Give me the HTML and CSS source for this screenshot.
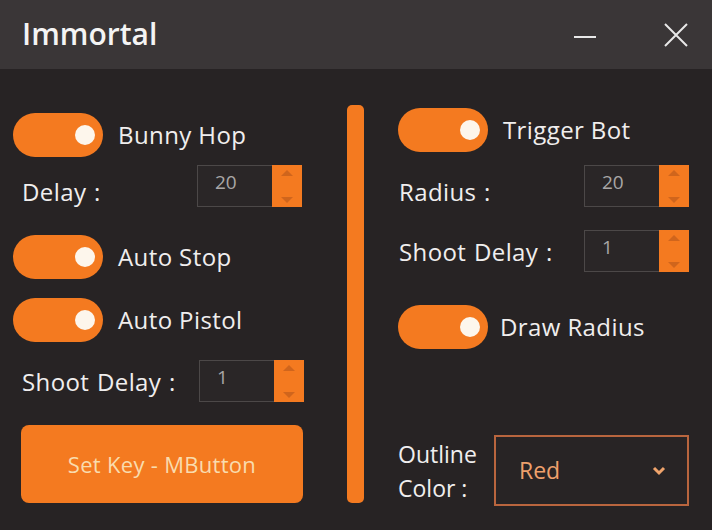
FILE: index.html
```html
<!DOCTYPE html>
<html lang="en">
<head>
    <link rel="stylesheet" href="styles.css">
</head>
<body>
    <div class="window">
        <div class="titlebar">
            <span class="title">Immortal</span>
            <div class="controls">
                <svg class="ctl" width="24" height="24" viewBox="0 0 24 24"><line x1="1" y1="14" x2="23" y2="14" stroke="#e8e8e8" stroke-width="2"/></svg>
                <svg class="ctl close" width="26" height="26" viewBox="0 0 26 26"><path d="M2 2 L24 24 M24 2 L2 24" stroke="#e8e8e8" stroke-width="2" fill="none"/></svg>
            </div>
        </div>

        <div class="content">
            <div class="column left">
                <div class="row toggle-row r1">
                    <div class="toggle"><span class="knob"></span></div>
                    <span class="label">Bunny Hop</span>
                </div>
                <div class="row field-row r2">
                    <span class="field-label low">Delay :</span>
                    <div class="spinner">
                        <div class="spin-value">20</div>
                        <div class="spin-btns">
                            <svg width="30" height="42" viewBox="0 0 30 42"><path d="M9 11 L15 5 L21 11 Z" fill="#d0651c"/><path d="M9 32 L15 38 L21 32 Z" fill="#d0651c"/></svg>
                        </div>
                    </div>
                </div>
                <div class="row toggle-row r3">
                    <div class="toggle"><span class="knob"></span></div>
                    <span class="label">Auto Stop</span>
                </div>
                <div class="row toggle-row r4">
                    <div class="toggle"><span class="knob"></span></div>
                    <span class="label">Auto Pistol</span>
                </div>
                <div class="row field-row r5">
                    <span class="field-label">Shoot Delay :</span>
                    <div class="spinner">
                        <div class="spin-value">1</div>
                        <div class="spin-btns">
                            <svg width="30" height="42" viewBox="0 0 30 42"><path d="M9 11 L15 5 L21 11 Z" fill="#d0651c"/><path d="M9 32 L15 38 L21 32 Z" fill="#d0651c"/></svg>
                        </div>
                    </div>
                </div>
                <button class="key-btn">Set Key - MButton</button>
            </div>

            <div class="divider"></div>

            <div class="column right">
                <div class="row toggle-row q1">
                    <div class="toggle"><span class="knob"></span></div>
                    <span class="label">Trigger Bot</span>
                </div>
                <div class="row field-row q2">
                    <span class="field-label low">Radius :</span>
                    <div class="spinner">
                        <div class="spin-value">20</div>
                        <div class="spin-btns">
                            <svg width="30" height="42" viewBox="0 0 30 42"><path d="M9 11 L15 5 L21 11 Z" fill="#d0651c"/><path d="M9 32 L15 38 L21 32 Z" fill="#d0651c"/></svg>
                        </div>
                    </div>
                </div>
                <div class="row field-row q3">
                    <span class="field-label">Shoot Delay :</span>
                    <div class="spinner">
                        <div class="spin-value">1</div>
                        <div class="spin-btns">
                            <svg width="30" height="42" viewBox="0 0 30 42"><path d="M9 11 L15 5 L21 11 Z" fill="#d0651c"/><path d="M9 32 L15 38 L21 32 Z" fill="#d0651c"/></svg>
                        </div>
                    </div>
                </div>
                <div class="row toggle-row q4">
                    <div class="toggle"><span class="knob"></span></div>
                    <span class="label">Draw Radius</span>
                </div>
                <div class="row outline-row">
                    <span class="outline-label">Outline<br>Color :</span>
                    <div class="dropdown">
                        <span class="dd-value">Red</span>
                        <svg width="16" height="12" viewBox="0 0 16 12"><path d="M3 3 L8 8 L13 3" fill="none" stroke="#f0a46c" stroke-width="3"/></svg>
                    </div>
                </div>
            </div>
        </div>
    </div>
</body>
</html>
```

FILE: styles.css
```css
body
{
    margin: 0;
    background-color: #272324;
    font-family: "Open Sans", "Noto Sans", sans-serif;
    color: #f0eeee;
}
.window
{
    width: 712px;
    height: 530px;
    overflow: hidden;
}
.titlebar
{
    height: 69px;
    background-color: #3a3637;
    display: flex;
    align-items: center;
    justify-content: space-between;
    padding: 0 22px;
    box-sizing: border-box;
}
.title
{
    font-size: 30px;
    font-weight: 600;
    color: #f4f4f4;
    margin-top: -2px;
}
.controls
{
    display: flex;
    align-items: center;
    gap: 66px;
    margin-right: 1px;
}
.content
{
    display: flex;
    padding-left: 13px;
}
.column
{
    display: flex;
    flex-direction: column;
}
.left
{
    width: 291px;
}
.right
{
    width: 292px;
    margin-left: 34px;
}
.divider
{
    width: 17px;
    height: 398px;
    margin-top: 36px;
    margin-left: 43px;
    background-color: #f47a20;
    border-radius: 5px;
}
.row
{
    display: flex;
    align-items: center;
}
.toggle
{
    width: 90px;
    height: 44px;
    border-radius: 22px;
    background-color: #f47a20;
    position: relative;
    flex-shrink: 0;
}
.knob
{
    position: absolute;
    right: 8px;
    top: 12px;
    width: 20px;
    height: 20px;
    border-radius: 50%;
    background-color: #fdf6ec;
}
.label
{
    font-size: 24px;
    letter-spacing: 0.4px;
    margin-left: 15px;
    margin-top: -2px;
}
.field-label
{
    font-size: 24px;
    letter-spacing: 0.4px;
    word-spacing: 1px;
    width: 175px;
    padding-left: 9px;
    flex-shrink: 0;
}
.field-label.low
{
    padding-top: 12px;
    line-height: 30px;
}
.spinner
{
    display: flex;
    height: 42px;
}
.spin-value
{
    width: 75px;
    box-sizing: border-box;
    border: 1px solid #4c4848;
    border-right: none;
    background-color: #2a2627;
    color: #a9a6a6;
    font-size: 19px;
    padding: 3px 0 0 17px;
}
.spin-btns
{
    width: 30px;
    background-color: #f47a20;
}
.spin-btns svg
{
    display: block;
}
.r1 { margin-top: 44px; }
.r2 { margin-top: 8px; }
.r3 { margin-top: 28px; }
.r4 { margin-top: 19px; }
.r5 { margin-top: 18px; }
.r5 .spin-value { margin-left: 2px; }
.key-btn
{
    margin-top: 23px;
    margin-left: 8px;
    width: 282px;
    height: 78px;
    border: none;
    border-radius: 8px;
    background-color: #f47a20;
    color: #f9dcae;
    font-family: "Open Sans", "Noto Sans", sans-serif;
    font-size: 22px;
    letter-spacing: 0.3px;
}
.q1 { margin-top: 39px; }
.q2 { margin-top: 13px; }
.q3 { margin-top: 23px; }
.q4 { margin-top: 33px; }
.right .field-label
{
    width: 185px;
    padding-left: 1px;
}
.q4 .label
{
    margin-left: 12px;
}
.outline-row
{
    margin-top: 86px;
}
.outline-label
{
    font-size: 23px;
    line-height: 34px;
    width: 96px;
    flex-shrink: 0;
}
.dropdown
{
    width: 195px;
    height: 71px;
    box-sizing: border-box;
    border: 2px solid #b9653e;
    background-color: #282425;
    display: flex;
    align-items: center;
    justify-content: space-between;
    padding: 0 20px 0 23px;
}
.dd-value
{
    color: #eea06c;
    font-size: 23px;
    margin-top: -2px;
}
```
